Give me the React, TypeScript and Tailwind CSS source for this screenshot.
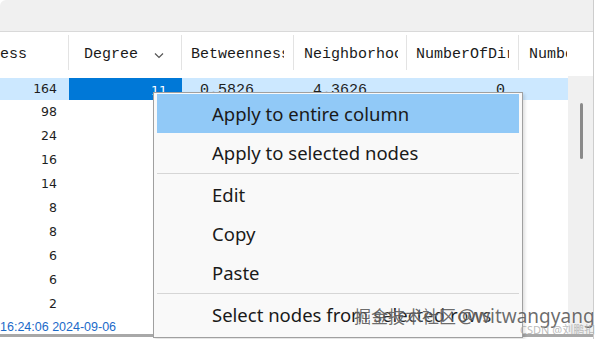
import React from "react";

const col0 = ["164", "98", "24", "16", "14", "8", "8", "6", "6", "2"];

function Chevron() {
  return (
    <svg width="10" height="7" viewBox="0 0 10 7" className="ml-auto mr-[17px]">
      <path d="M1 1.5 L5 5.5 L9 1.5" fill="none" stroke="#555" strokeWidth="1.2" />
    </svg>
  );
}

function HeaderCell({ w, children, last }: { w: string; children: React.ReactNode; last?: boolean }) {
  return (
    <div className={`${w} shrink-0 mt-[3px] h-[35px] pt-[5px] flex items-center overflow-hidden whitespace-nowrap ${last ? "" : "border-r border-[#e3e3e3]"}`}>
      {children}
    </div>
  );
}

function MenuItem({ children, active }: { children: React.ReactNode; active?: boolean }) {
  return (
    <div className={`h-[39px] flex items-center pl-[55px] whitespace-nowrap ${active ? "bg-[#91c9f7]" : ""}`}>
      {children}
    </div>
  );
}

function Sep() {
  return (
    <div className="h-[3px] flex items-center">
      <div className="h-px w-full bg-[#d6d6d6]" />
    </div>
  );
}

export default function App() {
  return (
    <div className="relative w-[597px] h-[339px] overflow-hidden bg-white">
      <div className="flex h-full">
        <div className="w-[594px] h-full flex flex-col border-r border-[#cdcdcd] shrink-0">
          <div className="h-[32px] shrink-0 bg-[#f0f0f0] border-b border-[#d9d9d9] rounded-tl-[6px]" />
          <div className="h-[44px] shrink-0 flex font-['Liberation_Mono',monospace] text-[15px] text-[#1a1a1a]">
            <HeaderCell w="w-[69px]">
              <span>ess</span>
            </HeaderCell>
            <HeaderCell w="w-[113px]">
              <span className="pl-[15px]">Degree</span>
              <Chevron />
            </HeaderCell>
            <HeaderCell w="w-[112px]">
              <div className="pl-[9px] w-[102px] overflow-hidden">Betweenness</div>
            </HeaderCell>
            <HeaderCell w="w-[113px]">
              <div className="pl-[10px] w-[104px] overflow-hidden">Neighborhood</div>
            </HeaderCell>
            <HeaderCell w="w-[112px]">
              <div className="pl-[9px] w-[102px] overflow-hidden">NumberOfDirected</div>
            </HeaderCell>
            <HeaderCell w="flex-1" last>
              <div className="pl-[10px] w-[48px] overflow-hidden">NumberOfUndirected</div>
            </HeaderCell>
          </div>
          <div className="h-[258px] shrink-0 flex">
            <div className="w-[568px] flex flex-col">
              <div className="mt-[2px] h-[22px] flex bg-[#cce8ff] items-center text-[#1e1e1e]">
                <div className="w-[69px] pr-[12px] text-right font-['DejaVu_Sans',sans-serif] text-[12.5px]">164</div>
                <div className="w-[113px] h-full bg-[#0078d7] text-white pr-[15px] pt-[4px] flex items-center justify-end font-['DejaVu_Sans',sans-serif] text-[12.5px]">11</div>
                <div className="w-[112px] pl-[18px] pt-[4px] font-['Liberation_Mono',monospace] text-[15px]">0.5826</div>
                <div className="w-[113px] pl-[19px] pt-[4px] font-['Liberation_Mono',monospace] text-[15px]">4.3626</div>
                <div className="w-[112px] pr-[14px] pt-[4px] text-right font-['Liberation_Mono',monospace] text-[15px]">0</div>
                <div className="flex-1" />
              </div>
              {col0.slice(1).map((v, i) => (
                <div key={i} className="h-[24px] flex items-center">
                  <div className="w-[69px] pr-[12px] text-right font-['DejaVu_Sans',sans-serif] text-[12.5px] text-[#1e1e1e]">{v}</div>
                </div>
              ))}
              <div className="flex-1" />
              <div className="h-[14px] flex items-center font-['Liberation_Sans',sans-serif] text-[12.5px] text-[#1b6ac9] leading-none">
                16:24:06 2024-09-06
              </div>
            </div>
            <div className="w-[25px] bg-[#f0f0f0] pt-[27px] pl-[12px]">
              <div className="w-[3px] h-[56px] rounded-full bg-[#8a8a8a]" />
            </div>
          </div>
          <div className="h-[3px] shrink-0 bg-[#a8a8a8]" />
        </div>
        <div className="flex-1 bg-white" />
      </div>

      <div className="absolute left-[153px] top-[92px] w-[370px] h-[246px] border border-[#a0a0a0] bg-[#f9f9f9] pt-[1px] px-[3px] pb-[3px] shadow-[2px_2px_3px_rgba(0,0,0,0.12)] font-['Noto_Sans',sans-serif] text-[18.5px] text-[#1a1a1a]">
        <MenuItem active>Apply to entire column</MenuItem>
        <MenuItem>Apply to selected nodes</MenuItem>
        <Sep />
        <MenuItem>Edit</MenuItem>
        <MenuItem>Copy</MenuItem>
        <MenuItem>Paste</MenuItem>
        <Sep />
        <MenuItem>Select nodes from selected rows</MenuItem>
      </div>

      <div className="absolute left-[354px] top-[302px] flex items-baseline whitespace-nowrap text-[rgba(60,60,60,0.75)] [text-shadow:0_0_2px_rgba(255,255,255,0.9)]">
        <span className="font-['Noto_Sans_CJK_SC',sans-serif] text-[17px]">掘金技术社区</span>
        <span className="ml-[2px] font-['Noto_Sans',sans-serif] text-[19px]">@witwangyang</span>
      </div>
      <div className="absolute left-[520px] top-[322px] whitespace-nowrap font-['Noto_Sans','Noto_Sans_CJK_SC',sans-serif] text-[11px] text-[rgba(170,170,170,0.8)]">
        CSDN @刘鹏扣
      </div>
    </div>
  );
}
